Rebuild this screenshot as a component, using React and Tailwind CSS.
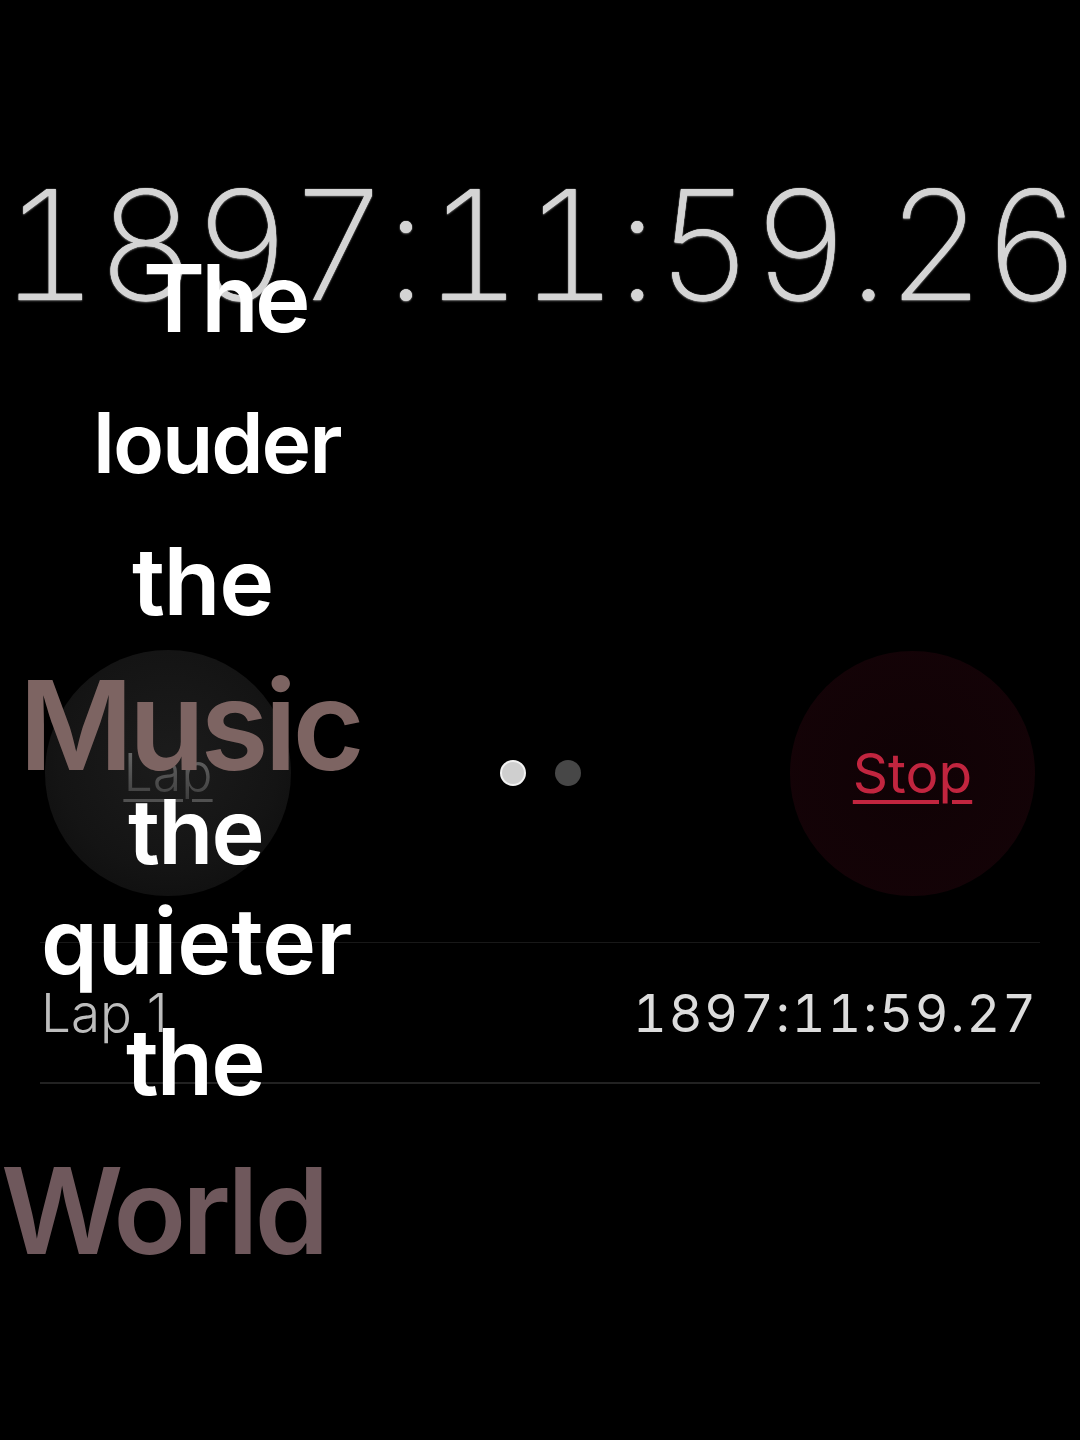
export default function App() {
  const lyric = "absolute font-semibold leading-none whitespace-nowrap";
  const lf = { fontFamily: "Inter, 'Liberation Sans', sans-serif" };
  return (
    <div className="relative w-[1080px] h-[1440px] bg-black overflow-hidden" style={lf}>
      {/* stopwatch */}
      <div className="flex flex-col">
        <div className="h-[169px]" />
        <div
          className="flex justify-center text-[152px] leading-[152px] font-extralight text-[#d4d4d4] tracking-[-2px]"
          style={{ fontVariantNumeric: "tabular-nums", textShadow: "0 0 1px #ffffff, 0 1px 2px #666" }}
        >
          1897:11:59.26
        </div>
        <div className="h-[329px]" />
        <div className="flex items-center justify-between px-[45px]">
          <div className="w-[246px] h-[246px] rounded-full flex items-center justify-center bg-[radial-gradient(circle_at_50%_45%,#1c1c1c_0%,#141414_60%,#0b0b0b_100%)]">
            <span className="text-[52px] leading-none text-[#555] underline underline-offset-[8px] decoration-[3px] font-light bg-gradient-to-b from-[#6a6a6a] to-[#3e3e3e] bg-clip-text text-transparent decoration-[#505050]">Lap</span>
          </div>
          <div className="flex items-center gap-[29px]">
            <div className="w-[26px] h-[26px] rounded-full bg-[#cfcfcf] border-2 border-[#f2f2f2]" />
            <div className="w-[26px] h-[26px] rounded-full bg-[#474747]" />
          </div>
          <div className="w-[245px] h-[245px] rounded-full flex items-center justify-center bg-[radial-gradient(circle_at_50%_50%,#100205_0%,#140307_80%,#0f0204_100%)]">
            <span className="text-[55px] leading-none text-[#c1253f] underline underline-offset-[7px] decoration-[4px] font-normal">Stop</span>
          </div>
        </div>
        <div className="h-[46px]" />
        <div className="mx-[40px] border-t border-[#181818] border-b-2 border-b-[#222] h-[142px] flex items-center justify-between">
          <span className="text-[53px] font-light text-[#bdbdbd] ml-[1px] mt-[2px]">Lap 1</span>
          <span
            className="text-[52px] font-normal text-[#dcdcdc] tracking-[2px] mr-[2px] mt-[2px]"
            style={{ fontVariantNumeric: "tabular-nums" }}
          >
            1897:11:59.27
          </span>
        </div>
      </div>

      {/* lyrics overlay */}
      <div className={lyric + " left-[143px] top-[251px] text-[94px] tracking-[-0.04em] text-white"}>The</div>
      <div className={lyric + " left-[93px] top-[401px] text-[84px] tracking-[-0.025em] text-white"}>louder</div>
      <div className={lyric + " left-[132px] top-[535px] text-[93px] tracking-[-0.015em] text-white"}>the</div>
      <div className={lyric + " left-[19px] top-[663px] text-[124px] tracking-[-0.035em] text-[#7d6462]"}>Music</div>
      <div className={lyric + " left-[128px] top-[787px] text-[90px] tracking-[-0.02em] text-white"}>the</div>
      <div className={lyric + " left-[41px] top-[896px] text-[91px] text-white"}>quieter</div>
      <div className={lyric + " left-[126px] top-[1016px] text-[92px] tracking-[-0.02em] text-white"}>the</div>
      <div className={lyric + " left-[1px] top-[1151px] text-[120px] tracking-[-0.035em] text-[#6f585c]"}>World</div>
    </div>
  );
}
